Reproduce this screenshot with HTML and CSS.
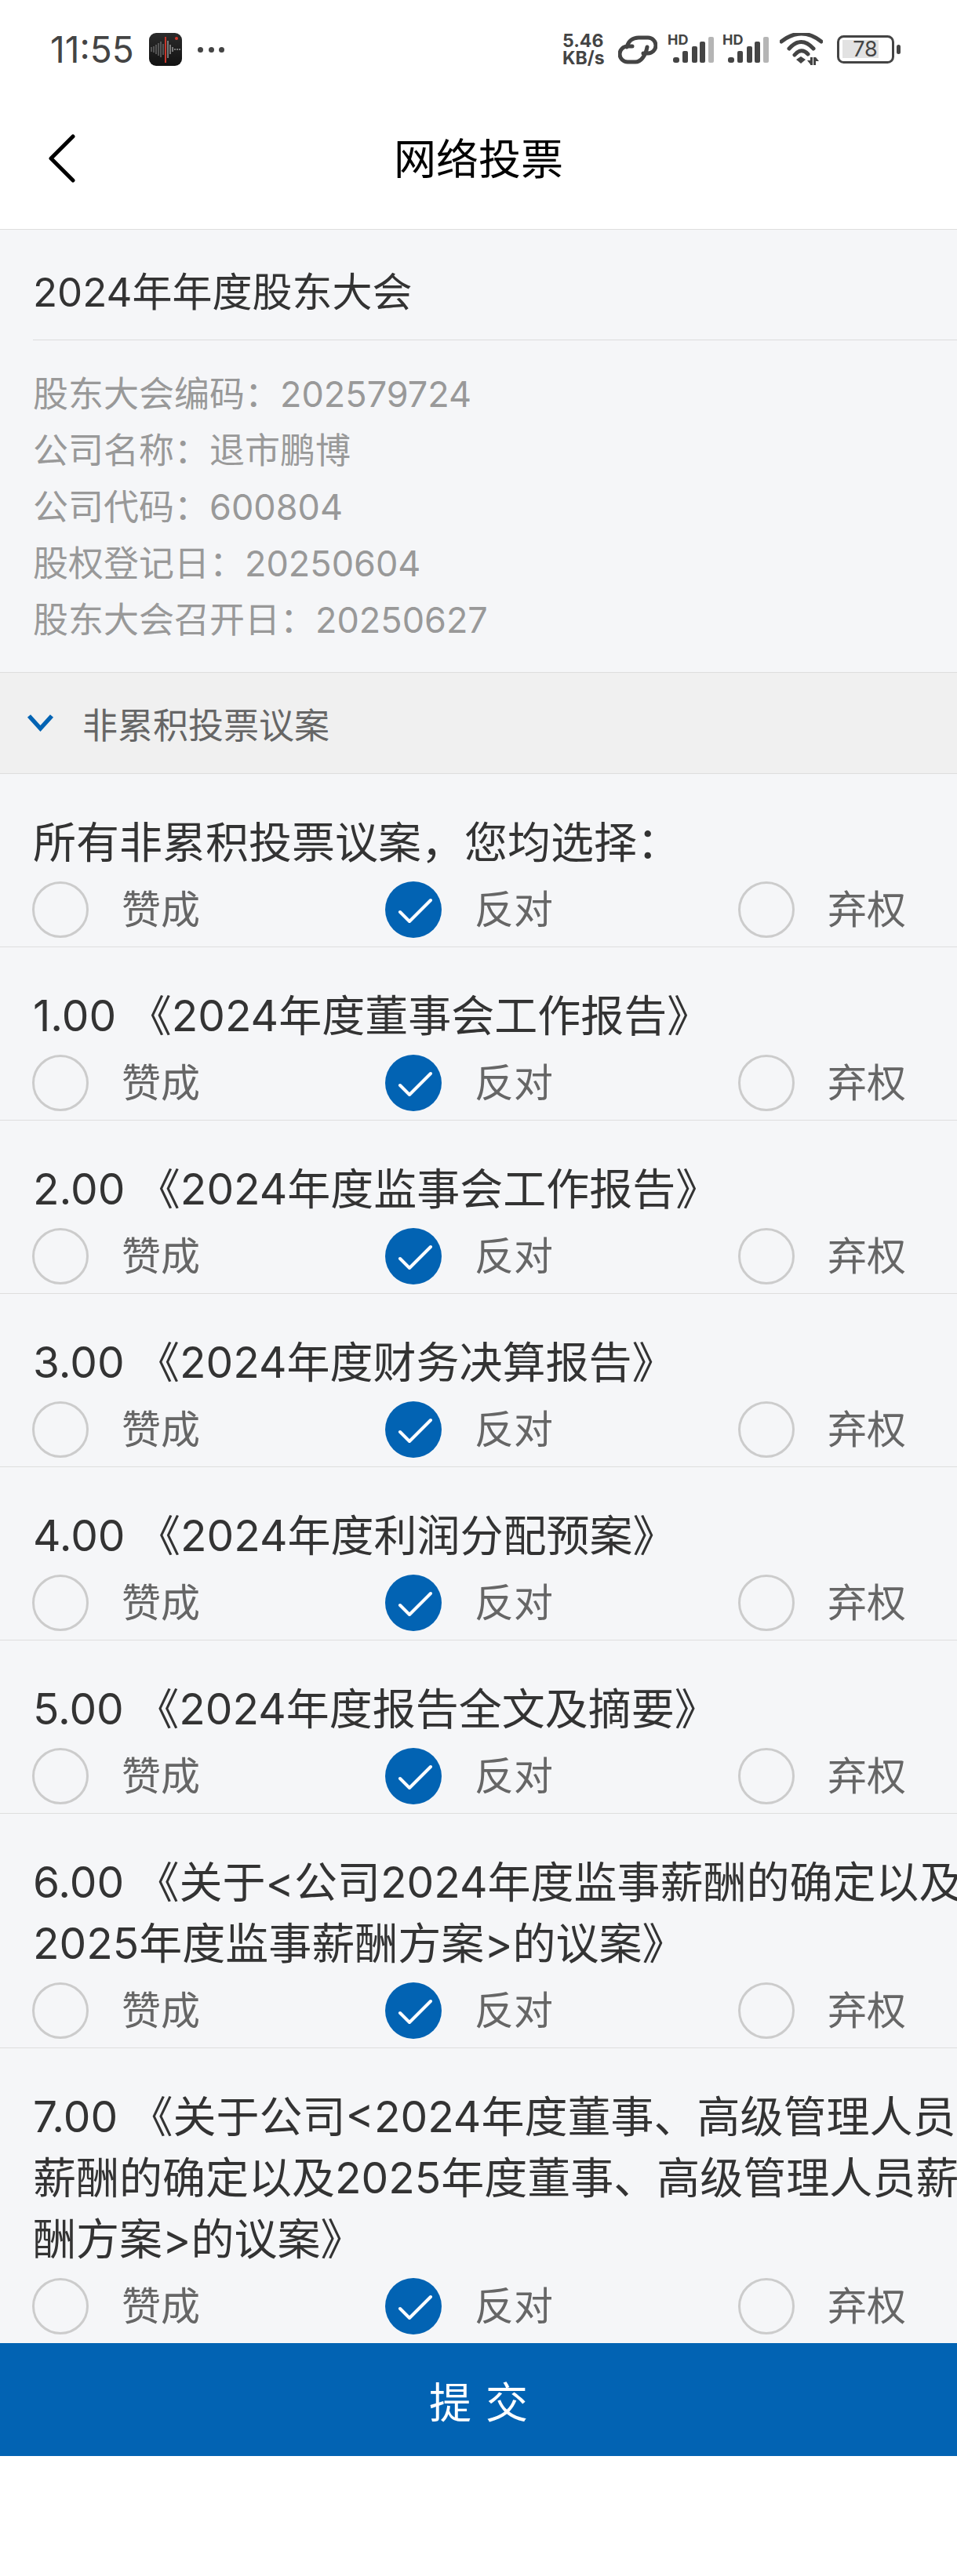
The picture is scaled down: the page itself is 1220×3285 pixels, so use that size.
FILE: index.html
```html
<!DOCTYPE html>
<html lang="zh-CN">
<head>
    <meta charset="UTF-8">
    <meta name="viewport" content="width=device-width, initial-scale=1.0">
    <title>网络投票</title>
    <link rel="stylesheet" href="styles.css">
</head>
<body>
    <svg class="defs" width="0" height="0">
        <symbol id="check" viewBox="0 0 72 72">
            <path d="M19 39 L31 51 L58 24" fill="none" stroke="#fff" stroke-width="4" stroke-linecap="round" stroke-linejoin="round"/>
        </symbol>
        <symbol id="bars" viewBox="0 0 60 38">
            <rect x="7" y="29" width="8" height="7" rx="3" fill="#444"/>
            <rect x="19" y="21" width="7" height="15" rx="2" fill="#444"/>
            <rect x="31" y="15" width="7" height="21" rx="2" fill="#444"/>
            <rect x="41" y="9" width="7" height="27" rx="2" fill="#444"/>
            <rect x="52" y="3" width="7" height="33" rx="2" fill="#b5b5b5"/>
        </symbol>
        <linearGradient id="recorder-bg" x1="0" y1="0" x2="0" y2="1">
            <stop offset="0" stop-color="#2b2b2b"/>
            <stop offset="1" stop-color="#121212"/>
        </linearGradient>
    </svg>

    <div class="status-bar">
        <span class="time">11:55</span>
        <svg class="recorder" width="42" height="42" viewBox="0 0 42 42">
            <rect width="42" height="42" rx="9" fill="url(#recorder-bg)"/>
            <path d="M3 18v6M6 17v8M9 15v12M12 13v16M15 11v20M18 14v14" stroke="#8a8a8a" stroke-width="1"/>
            <path d="M24 10v22M27 15v12M30 18v6M33 20v2M36 20v2M39 20v2" stroke="#d5d5d5" stroke-width="1"/>
            <rect x="20" y="5" width="2" height="33" fill="#c9352a"/>
            <circle cx="35" cy="7" r="2" fill="#d8392c"/>
        </svg>
        <span class="dots"><i></i><i></i><i></i></span>
        <div class="status-right">
            <div class="speed"><span>5.46</span><span>KB/s</span></div>
            <svg class="link" width="50" height="37" viewBox="0 0 50 37">
                <path d="M11 15C13 7 19 3 26 3H38A10 10 0 0 1 38 23H32M37 15C35 26 29 34 22 34H12A10 10 0 0 1 12 14H18" fill="none" stroke="#444" stroke-width="5" stroke-linecap="round"/>
            </svg>
            <div class="signal"><span>HD</span><svg width="60" height="38"><use href="#bars"/></svg></div>
            <div class="signal second"><span>HD</span><svg width="60" height="38"><use href="#bars"/></svg></div>
            <svg class="wifi" width="55" height="42" viewBox="0 0 55 42">
                <path d="M2 11Q27.500 -9 53 11M12 20Q27.500 3 43 20M19 28Q27.500 18 36 27" fill="none" stroke="#444" stroke-width="5" stroke-linecap="round"/>
                <path d="M21 34L27 30L33 34L27 39Z" fill="#444"/>
                <path d="M39 31h3v10h-3zM35 35l4 5v-5zM43 31h3v10h-3zM46 31l4 5h-4z" fill="#444"/>
            </svg>
            <div class="battery">
                <svg width="83" height="36" viewBox="0 0 83 36">
                    <rect x="3.500" y="1.500" width="70" height="33" rx="7" fill="none" stroke="#444" stroke-width="3"/>
                    <rect x="9" y="6" width="46" height="23" fill="#e2e2e2"/>
                    <rect x="78" y="12" width="5" height="12" rx="2.500" fill="#444"/>
                </svg>
                <span>78</span>
            </div>
        </div>
    </div>

    <div class="nav">
        <svg class="back" width="36" height="62" viewBox="0 0 36 62">
            <path d="M32 3 L4 31 L32 59" fill="none" stroke="#000" stroke-width="5" stroke-linecap="round" stroke-linejoin="round"/>
        </svg>
        <h1>网络投票</h1>
    </div>

    <div class="content">
        <div class="meeting-title"><span>2024年年度股东大会</span></div>
        <div class="meeting-info">
            <div>股东大会编码：202579724</div>
            <div>公司名称：退市鹏博</div>
            <div>公司代码：600804</div>
            <div>股权登记日：20250604</div>
            <div>股东大会召开日：20250627</div>
        </div>

        <div class="section-head">
            <svg class="chevron" width="35" height="24" viewBox="0 0 35 24">
                <path d="M3 3 L17.500 19 L32 3" fill="none" stroke="#0263b3" stroke-width="5.500"/>
            </svg>
            <span>非累积投票议案</span>
        </div>

        <div class="vote-row">
            <div class="vote-title">所有非累积投票议案，您均选择：</div>
            <div class="options">
                <div class="option"><span class="radio"></span>赞成</div>
                <div class="option"><span class="radio checked"><svg width="72" height="72"><use href="#check"/></svg></span>反对</div>
                <div class="option"><span class="radio"></span>弃权</div>
            </div>
        </div>
        <div class="vote-row">
            <div class="vote-title">1.00 《2024年度董事会工作报告》</div>
            <div class="options">
                <div class="option"><span class="radio"></span>赞成</div>
                <div class="option"><span class="radio checked"><svg width="72" height="72"><use href="#check"/></svg></span>反对</div>
                <div class="option"><span class="radio"></span>弃权</div>
            </div>
        </div>
        <div class="vote-row">
            <div class="vote-title">2.00 《2024年度监事会工作报告》</div>
            <div class="options">
                <div class="option"><span class="radio"></span>赞成</div>
                <div class="option"><span class="radio checked"><svg width="72" height="72"><use href="#check"/></svg></span>反对</div>
                <div class="option"><span class="radio"></span>弃权</div>
            </div>
        </div>
        <div class="vote-row">
            <div class="vote-title">3.00 《2024年度财务决算报告》</div>
            <div class="options">
                <div class="option"><span class="radio"></span>赞成</div>
                <div class="option"><span class="radio checked"><svg width="72" height="72"><use href="#check"/></svg></span>反对</div>
                <div class="option"><span class="radio"></span>弃权</div>
            </div>
        </div>
        <div class="vote-row">
            <div class="vote-title">4.00 《2024年度利润分配预案》</div>
            <div class="options">
                <div class="option"><span class="radio"></span>赞成</div>
                <div class="option"><span class="radio checked"><svg width="72" height="72"><use href="#check"/></svg></span>反对</div>
                <div class="option"><span class="radio"></span>弃权</div>
            </div>
        </div>
        <div class="vote-row">
            <div class="vote-title">5.00 《2024年度报告全文及摘要》</div>
            <div class="options">
                <div class="option"><span class="radio"></span>赞成</div>
                <div class="option"><span class="radio checked"><svg width="72" height="72"><use href="#check"/></svg></span>反对</div>
                <div class="option"><span class="radio"></span>弃权</div>
            </div>
        </div>
        <div class="vote-row">
            <div class="vote-title">6.00 《关于&lt;公司2024年度监事薪酬的确定以及<br>2025年度监事薪酬方案&gt;的议案》</div>
            <div class="options">
                <div class="option"><span class="radio"></span>赞成</div>
                <div class="option"><span class="radio checked"><svg width="72" height="72"><use href="#check"/></svg></span>反对</div>
                <div class="option"><span class="radio"></span>弃权</div>
            </div>
        </div>
        <div class="vote-row last">
            <div class="vote-title">7.00 《关于公司&lt;2024年度董事、高级管理人员<br>薪酬的确定以及2025年度董事、高级管理人员薪<br>酬方案&gt;的议案》</div>
            <div class="options">
                <div class="option"><span class="radio"></span>赞成</div>
                <div class="option"><span class="radio checked"><svg width="72" height="72"><use href="#check"/></svg></span>反对</div>
                <div class="option"><span class="radio"></span>弃权</div>
            </div>
        </div>
    </div>

    <div class="submit">提交</div>
</body>
</html>
```

FILE: styles.css
```css
body {
    margin: 0;
    background: #fff;
    font-family: Inter, "Noto Sans CJK SC", sans-serif;
    overflow-x: hidden;
}

.defs {
    display: block;
    height: 0;
}

.status-bar {
    height: 126px;
    padding: 0 72px 0 64px;
    display: flex;
    align-items: center;
    color: #444;
}

.time {
    font-size: 46px;
    width: 126px;
}

.recorder {
    flex: none;
}

.dots {
    display: flex;
    gap: 6.5px;
    margin-left: 20px;
}

.dots i {
    width: 7px;
    height: 7px;
    border-radius: 50%;
    background: #444;
}

.status-right {
    margin-left: auto;
    display: flex;
    align-items: center;
    gap: 12px;
}

.speed {
    display: flex;
    flex-direction: column;
    font-size: 23px;
    font-weight: 700;
    line-height: 22px;
    width: 60px;
    margin-right: -1px;
}

.link {
    margin-right: 1px;
}

.signal {
    position: relative;
    width: 60px;
    height: 38px;
}

.signal.second {
    margin-left: -2px;
}

.signal svg {
    display: block;
}

.signal span {
    position: absolute;
    left: 0;
    top: -3px;
    font-size: 18px;
    font-weight: 700;
    line-height: 20px;
}

.wifi {
    margin: 0 4px 0 1px;
}

.battery {
    position: relative;
    height: 36px;
}

.battery svg {
    display: block;
}

.battery span {
    position: absolute;
    left: 15px;
    width: 46px;
    top: 0;
    text-align: center;
    font-size: 27px;
    line-height: 36px;
}

.nav {
    height: 147px;
    padding-bottom: 19px;
    position: relative;
    display: flex;
    align-items: center;
    justify-content: center;
    border-bottom: 1px solid #dedede;
}

.nav h1 {
    margin: 0;
    font-size: 54px;
    font-weight: 400;
    color: #000;
}

.back {
    position: absolute;
    left: 61px;
    top: 45px;
}

.content {
    background: #f5f6f8;
}

.meeting-title {
    padding: 40px 0 0 42px;
    font-size: 51px;
    color: #333;
    line-height: 80px;
}

.meeting-title span {
    display: block;
    padding-bottom: 20px;
    border-bottom: 1px solid #dcdcdc;
}

.meeting-info {
    padding: 33px 42px 30px;
    font-size: 45px;
    line-height: 72px;
    color: #999;
}

.section-head {
    height: 128px;
    padding-left: 34px;
    display: flex;
    align-items: center;
    gap: 36px;
    background: #f0f0f0;
    border-top: 1px solid #dedede;
    border-bottom: 1px solid #dedede;
    font-size: 45px;
    color: #666;
}

.vote-row {
    padding: 48px 0 11px;
    border-bottom: 1px solid #dedede;
}

.vote-row.last {
    border-bottom: none;
}

.vote-title {
    padding-left: 42px;
    font-size: 55px;
    line-height: 78px;
    color: #333;
    margin-bottom: 11px;
    white-space: nowrap;
}

.options {
    padding: 0 65px 0 41px;
    display: flex;
    justify-content: space-between;
}

.option {
    display: flex;
    align-items: center;
    gap: 42px;
    font-size: 50px;
    line-height: 72px;
    color: #666;
}

.radio {
    width: 72px;
    height: 72px;
    box-sizing: border-box;
    border: 3px solid #ccc;
    border-radius: 50%;
}

.radio.checked {
    border: none;
    background: #0263b3;
}

.radio svg {
    display: block;
}

.submit {
    height: 144px;
    display: flex;
    align-items: center;
    justify-content: center;
    background: #0263b3;
    color: #fff;
    font-size: 54px;
    letter-spacing: 18px;
    padding-left: 18px;
}
```
